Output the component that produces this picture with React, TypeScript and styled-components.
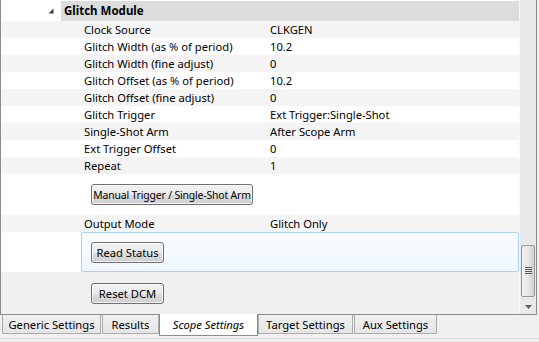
import React from "react";
import styled, { createGlobalStyle } from "styled-components";

const Global = createGlobalStyle`
  html, body { margin: 0; padding: 0; background: #f0f0f0; }
  body { font-family: "Noto Sans", "Open Sans", sans-serif; font-size: 11.2px; color: #000; }
`;

const Window = styled.div`
  width: 539px;
  height: 342px;
  background: #f0f0f0;
  display: flex;
  flex-direction: column;
  overflow: hidden;
`;

const Panel = styled.div`
  width: 537px;
  height: 315px;
  box-sizing: border-box;
  border-left: 1px solid #8c8c8c;
  border-right: 1px solid #8c8c8c;
  border-bottom: 1px solid #8c8c8c;
  display: flex;
  background: #f0f0f0;
`;

const Content = styled.div`
  width: 518px;
  display: flex;
  flex-direction: column;
  padding-top: 1px;
  background: #fff;
`;

const HeaderRow = styled.div`
  display: flex;
  height: 20px;
  align-items: center;
`;

const Expander = styled.div`
  width: 60px;
  height: 20px;
  display: flex;
  align-items: center;
  justify-content: flex-end;
  padding-right: 7px;
  box-sizing: border-box;
  background: #fff;
`;

const HeaderBand = styled.div`
  flex: 1;
  height: 20px;
  background: #dcdcdc;
  font-weight: bold;
  font-size: 11.5px;
  line-height: 20px;
  padding-left: 3px;
`;

const Row = styled.div<{ $alt?: boolean }>`
  display: grid;
  grid-template-columns: 269px 1fr;
  height: 17px;
  line-height: 17px;
  background: ${(p) => (p.$alt ? "#f4f4f4" : "#ffffff")};
  white-space: nowrap;
`;

const Label = styled.div`
  padding-left: 83px;
`;

const Value = styled.div``;

const ButtonRow = styled.div<{ $h: number; $bg: string }>`
  height: ${(p) => p.$h}px;
  background: ${(p) => p.$bg};
  display: flex;
  align-items: center;
  padding-left: 90px;
  box-sizing: border-box;
`;

const StatusRow = styled.div`
  height: 40px;
  display: flex;
  background: #fff;
  padding-left: 80px;
`;

const StatusBox = styled.div`
  flex: 1;
  box-sizing: border-box;
  border: 1px solid #a9d1f5;
  border-radius: 2px;
  background: linear-gradient(#fbfdff, #eef6ff);
  display: flex;
  align-items: center;
  padding-left: 9px;
`;

const BottomArea = styled.div`
  flex: 1;
  background: #f0f0f0;
  padding: 11px 0 0 90px;
`;

const Button = styled.button<{ $w: number; $fs?: number }>`
  height: 21px;
  width: ${(p) => p.$w}px;
  box-sizing: border-box;
  border: 1px solid #707070;
  border-radius: 3px;
  background: linear-gradient(#f2f2f2 0%, #ebebeb 50%, #dddddd 51%, #cfcfcf 100%);
  box-shadow: inset 0 0 0 1px rgba(255, 255, 255, 0.7);
  font-family: inherit;
  font-size: ${(p) => p.$fs ?? 11.2}px;
  letter-spacing: ${(p) => (p.$fs ? "-0.15px" : "0")};
  color: #000;
  padding: 0;
  display: flex;
  align-items: center;
  justify-content: center;
  white-space: nowrap;
`;

const Scrollbar = styled.div`
  width: 17px;
  box-sizing: border-box;
  border-left: 1px solid #f7f7f7;
  background: #e9e9e9;
  display: flex;
  flex-direction: column;
  align-items: center;
  padding-top: 245px;
`;

const Thumb = styled.div`
  width: 14px;
  height: 52px;
  box-sizing: border-box;
  border: 1px solid #979797;
  border-radius: 2px;
  background: linear-gradient(90deg, #f2f2f2, #e4e4e4 60%, #cfcfcf);
  display: flex;
  align-items: center;
  justify-content: center;
`;

const ArrowSlot = styled.div`
  margin-top: 7px;
  height: 6px;
  display: flex;
  align-items: center;
`;

const TabStrip = styled.div`
  display: flex;
  align-items: flex-start;
  height: 23px;
  padding-left: 2px;
  border-bottom: 1px solid #dadada;
`;

const Tab = styled.div<{ $w: number; $gap: number }>`
  width: ${(p) => p.$w}px;
  height: 19px;
  box-sizing: border-box;
  margin-right: ${(p) => p.$gap}px;
  border: 1px solid #acacac;
  border-top: none;
  background: linear-gradient(#f0f0f0, #e5e5e5);
  display: flex;
  align-items: center;
  justify-content: center;
  white-space: nowrap;
  color: #000;
`;

const ActiveTab = styled.div<{ $w: number }>`
  width: ${(p) => p.$w}px;
  height: 22px;
  margin-top: -1px;
  box-sizing: border-box;
  border: 1px solid #8c8c8c;
  border-top: none;
  background: #fff;
  display: flex;
  align-items: center;
  justify-content: center;
  font-style: italic;
  white-space: nowrap;
`;

const rows: [string, string][] = [
  ["Clock Source", "CLKGEN"],
  ["Glitch Width (as % of period)", "10.2"],
  ["Glitch Width (fine adjust)", "0"],
  ["Glitch Offset (as % of period)", "10.2"],
  ["Glitch Offset (fine adjust)", "0"],
  ["Glitch Trigger", "Ext Trigger:Single-Shot"],
  ["Single-Shot Arm", "After Scope Arm"],
  ["Ext Trigger Offset", "0"],
  ["Repeat", "1"],
];

export default function App() {
  return (
    <Window>
      <Global />
      <Panel>
        <Content>
          <HeaderRow>
            <Expander>
              <svg width="6" height="6" viewBox="0 0 6 6">
                <polygon points="5.5,0.5 5.5,5.5 0.5,5.5" fill="#3c3c3c" />
              </svg>
            </Expander>
            <HeaderBand>Glitch Module</HeaderBand>
          </HeaderRow>
          {rows.map(([l, v], i) => (
            <Row key={l} $alt={i % 2 === 0}>
              <Label>{l}</Label>
              <Value>{v}</Value>
            </Row>
          ))}
          <ButtonRow $h={41} $bg="#ffffff">
            <Button $w={162} $fs={10.4}>Manual Trigger / Single-Shot Arm</Button>
          </ButtonRow>
          <Row $alt>
            <Label>Output Mode</Label>
            <Value>Glitch Only</Value>
          </Row>
          <StatusRow>
            <StatusBox>
              <Button $w={73}>Read Status</Button>
            </StatusBox>
          </StatusRow>
          <BottomArea>
            <Button $w={73}>Reset DCM</Button>
          </BottomArea>
        </Content>
        <Scrollbar>
          <Thumb>
            <svg width="7" height="8" viewBox="0 0 7 8">
              <g stroke="#555" strokeWidth="1">
                <line x1="0" y1="0.5" x2="7" y2="0.5" />
                <line x1="0" y1="2.5" x2="7" y2="2.5" />
                <line x1="0" y1="4.5" x2="7" y2="4.5" />
                <line x1="0" y1="6.5" x2="7" y2="6.5" />
              </g>
            </svg>
          </Thumb>
          <ArrowSlot>
            <svg width="7" height="4" viewBox="0 0 7 4">
              <polygon points="0,0 7,0 3.5,4" fill="#606060" />
            </svg>
          </ArrowSlot>
        </Scrollbar>
      </Panel>
      <TabStrip>
        <Tab $w={99} $gap={1}>Generic Settings</Tab>
        <Tab $w={57} $gap={0}>Results</Tab>
        <ActiveTab $w={99}>Scope Settings</ActiveTab>
        <Tab $w={95} $gap={1}>Target Settings</Tab>
        <Tab $w={83} $gap={0}>Aux Settings</Tab>
      </TabStrip>
    </Window>
  );
}
